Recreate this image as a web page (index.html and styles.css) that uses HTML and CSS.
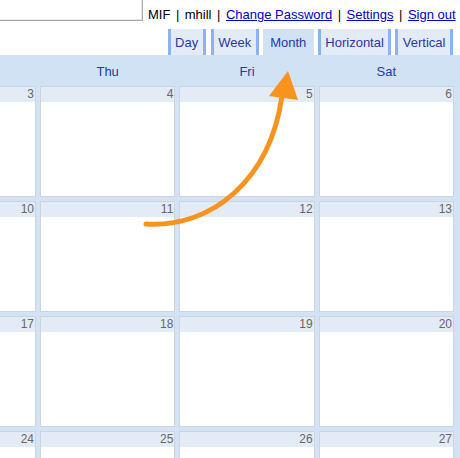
FILE: index.html
```html
<!DOCTYPE html>
<html>
<head>
<meta charset="utf-8">
<link rel="stylesheet" href="styles.css">
</head>
<body>
<div class="page">
  <div class="topbar">
    <div class="search"></div>
    <div class="userlinks">MIF<span class="sep">|</span>mhill<span class="sep">|</span><a href="#">Change Password</a><span class="sep">|</span><a href="#">Settings</a><span class="sep">|</span><a href="#">Sign out</a></div>
  </div>
  <div class="tabs">
    <span class="tab">Day</span>
    <span class="tab">Week</span>
    <span class="tab selected">Month</span>
    <span class="tab">Horizontal</span>
    <span class="tab">Vertical</span>
  </div>
  <div class="dayhead">
    <div></div>
    <div>Thu</div>
    <div>Fri</div>
    <div>Sat</div>
  </div>
  <div class="month">
    <div class="cell cut"><div class="date">3</div></div>
    <div class="cell"><div class="date">4</div></div>
    <div class="cell"><div class="date">5</div></div>
    <div class="cell"><div class="date">6</div></div>
    <div class="cell cut"><div class="date">10</div></div>
    <div class="cell"><div class="date">11</div></div>
    <div class="cell"><div class="date">12</div></div>
    <div class="cell"><div class="date">13</div></div>
    <div class="cell cut"><div class="date">17</div></div>
    <div class="cell"><div class="date">18</div></div>
    <div class="cell"><div class="date">19</div></div>
    <div class="cell"><div class="date">20</div></div>
    <div class="cell cut"><div class="date">24</div></div>
    <div class="cell"><div class="date">25</div></div>
    <div class="cell"><div class="date">26</div></div>
    <div class="cell"><div class="date">27</div></div>
  </div>
  <svg class="arrow" width="460" height="458" viewBox="0 0 460 458">
    <path d="M146,224 C212,228 270,180 282,96" fill="none" stroke="#f7931e" stroke-width="5" stroke-linecap="round"/>
    <polygon points="288,71 269,96 298,100" fill="#f7931e"/>
  </svg>
</div>
</body>
</html>
```
FILE: styles.css
```css
html, body {
  margin: 0;
  padding: 0;
  background: #ffffff;
}
.page {
  position: relative;
  width: 460px;
  height: 458px;
  overflow: hidden;
  font-family: "Liberation Sans", Arial, sans-serif;
  font-size: 13px;
  color: #000;
}
.topbar {
  display: flex;
  align-items: flex-start;
  height: 29px;
}
.search {
  width: 142px;
  height: 20px;
  border-right: 1px solid #a9a9a9;
  border-bottom: 1px solid #a9a9a9;
  box-shadow: inset -1px -1px 0 #e6e6e6;
  background: #fff;
}
.userlinks {
  margin-left: 5px;
  padding-top: 7px;
  line-height: 16px;
  white-space: nowrap;
}
.sep {
  margin: 0 5.5px;
}
.userlinks a {
  color: #0000cc;
  text-decoration: underline;
}
.tabs {
  display: flex;
  justify-content: flex-end;
  gap: 4px;
  padding-right: 7px;
  height: 26px;
}
.tab {
  box-sizing: border-box;
  height: 26px;
  padding: 2px 4.5px 0 4.5px;
  line-height: 24px;
  background: #e3ebf7;
  border-left: 3px solid #8ab3f5;
  border-right: 3px solid #8ab3f5;
  color: #2a37a8;
}
.tab:first-child {
  margin-right: 1px;
}
.tab.selected {
  background: #d0e2f4;
  border-color: #d0e2f4;
}
.dayhead {
  display: grid;
  grid-template-columns: 36px repeat(3, 1fr);
  column-gap: 4px;
  padding-right: 6px;
  height: 31px;
  box-sizing: border-box;
  padding-top: 2px;
  line-height: 29px;
  background: #d0e2f4;
  color: #2a37a8;
  text-align: center;
}
.month {
  display: grid;
  grid-template-columns: 36px repeat(3, 1fr);
  grid-auto-rows: 111px;
  gap: 4px;
  padding-right: 6px;
  padding-bottom: 4px;
  background: #d3e2f4;
}
.cell {
  box-sizing: border-box;
  border: 1px solid #ccd4dd;
  background: #fff;
}
.cell.cut {
  border-left: none;
}
.date {
  height: 15px;
  line-height: 15px;
  font-size: 12px;
  color: #666;
  text-align: right;
  padding-right: 1px;
  background: #e3ebf7;
}
.arrow {
  position: absolute;
  left: 0;
  top: 0;
  pointer-events: none;
}
```
